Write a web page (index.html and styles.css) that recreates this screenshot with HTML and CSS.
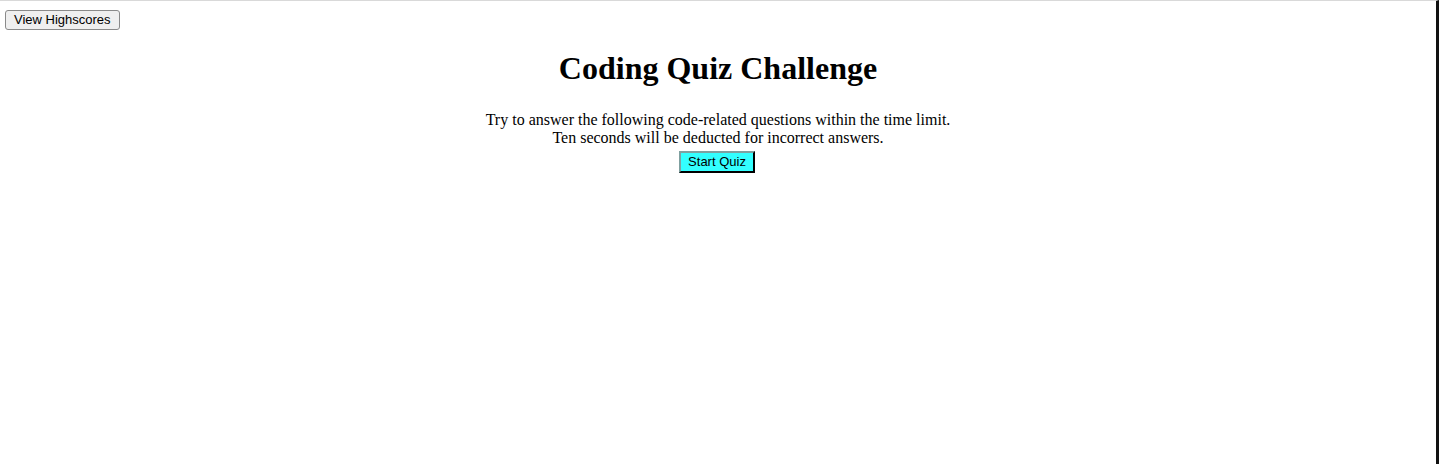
FILE: index.html
```html
<!DOCTYPE html>
<html lang="en">
<head>
<meta charset="utf-8">
<title>Coding Quiz Challenge</title>
<link rel="stylesheet" href="styles.css">
</head>
<body>
<div class="page">
  <header class="topbar">
    <button class="btn-highscores" type="button">View Highscores</button>
  </header>
  <main class="intro">
    <h1 class="title">Coding Quiz Challenge</h1>
    <p class="lead">Try to answer the following code-related questions within the time limit.<br>Ten seconds will be deducted for incorrect answers.</p>
    <button class="btn-start" type="button">Start Quiz</button>
  </main>
</div>
</body>
</html>
```
FILE: styles.css
```css
html, body {
  margin: 0;
  padding: 0;
  background: #ffffff;
}

.page {
  box-sizing: border-box;
  min-height: 100vh;
  width: 1439px;
  border-top: 1px solid #d9d9d9;
  border-right: 3px solid #111111;
  font-family: "Liberation Serif", "Times New Roman", serif;
  color: #000000;
}

.topbar {
  display: flex;
  padding: 9px 0 0 5px;
}

.btn-highscores {
  font-family: "Liberation Sans", Arial, sans-serif;
  font-size: 13px;
  line-height: 16px;
  height: 20px;
  padding: 0 8px;
  background: #efefef;
  color: #000;
  border: 1px solid #8a8a8a;
  border-radius: 3px;
}

.intro {
  display: flex;
  flex-direction: column;
  align-items: center;
  text-align: center;
}

.title {
  font-size: 32px;
  font-weight: bold;
  line-height: 37px;
  margin: 20px 0 24px;
}

.lead {
  font-size: 16px;
  line-height: 18px;
  margin: 0 0 4px;
}

.btn-start {
  font-family: "Liberation Sans", Arial, sans-serif;
  font-size: 13px;
  line-height: 16px;
  height: 22px;
  padding: 1px 7px;
  margin-left: -2px;
  background: #33ffff;
  color: #000;
  border: 2px outset #6a8a8a;
  border-color: #7fa0a0 #2f4f4f #2f4f4f #7fa0a0;
}
```
